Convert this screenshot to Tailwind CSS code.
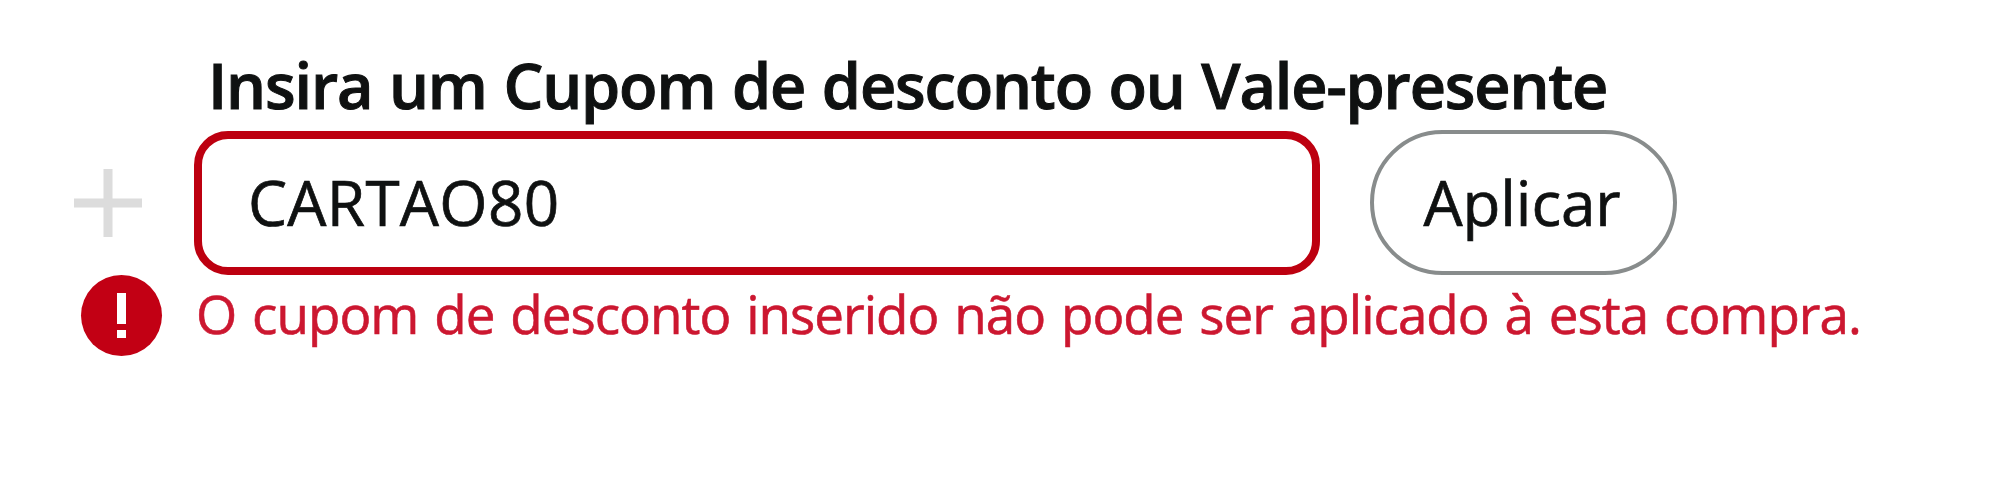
<!DOCTYPE html>
<html lang="pt-BR">
<head>
    <meta charset="utf-8" />
    <meta name="viewport" content="width=device-width, initial-scale=1.0">
    <title>Cupom de desconto</title>
    <script src="https://cdn.jsdelivr.net/npm/@tailwindcss/browser@4"></script>
</head>
<body class="bg-white h-[500px] overflow-hidden font-['Open_Sans',sans-serif] text-[#0f1111]">
    <form class="pt-[50px]">
        <!-- Title -->
        <label for="coupon" class="block w-fit pl-[208px] h-20 text-[63px] leading-[70px] font-semibold tracking-[-1.15px] [word-spacing:1.4px] [-webkit-text-stroke:1px] whitespace-nowrap">Insira um Cupom de desconto ou Vale-presente</label>

        <!-- Coupon field -->
        <div class="flex items-center h-[145px] pl-[74px]">
            <svg class="w-[68px] h-[68px]" viewBox="0 0 68 68" fill="none" stroke="#dcdcdc" stroke-width="9">
                <path d="M0 34H68M34 0V68" />
            </svg>
            <input id="coupon" type="text" value="CARTAO80" class="ml-[52px] w-[1126px] h-[144px] rounded-[34px] border-8 border-[#bd0010] bg-white pl-[46px] pb-0.5 text-[62px] tracking-[0.3px] [-webkit-text-stroke:0.7px] outline-none">
            <button type="button" class="ml-[50px] w-[307px] h-[145px] rounded-full border-4 border-[#888c8c] bg-white pr-[3px] text-[62px] tracking-[-0.1px] [-webkit-text-stroke:0.7px]">Aplicar</button>
        </div>

        <!-- Error message -->
        <div class="flex pl-20">
            <svg class="w-[83px] h-[82px]" viewBox="0 0 83 82">
                <circle cx="41.5" cy="40.5" r="40.5" fill="#c20014" />
                <path d="M37 18h9v31h-9zM37 55h9v8h-9z" fill="#fff" />
            </svg>
            <p class="ml-[33px] text-[53px] leading-[78px] tracking-[-1px] [word-spacing:3.1px] [-webkit-text-stroke:0.6px] text-[#cc1730] whitespace-nowrap">O cupom de desconto inserido não pode ser aplicado à esta compra.</p>
        </div>
    </form>
</body>
</html>
